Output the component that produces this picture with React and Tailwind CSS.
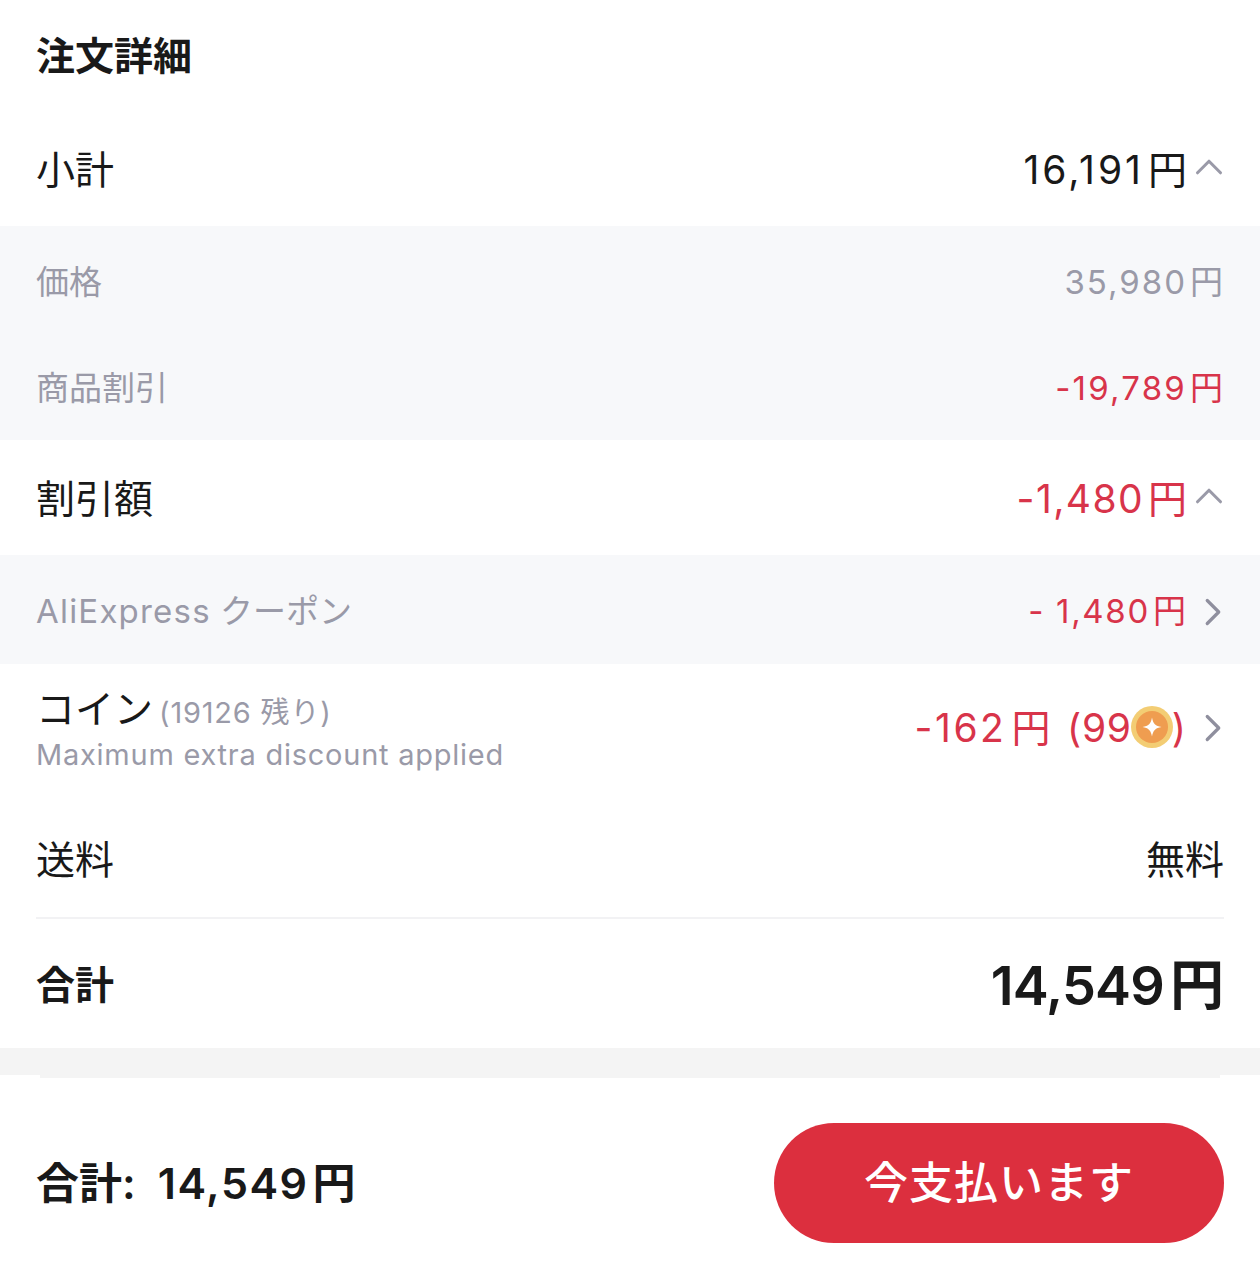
import { ChevronUp, ChevronRight } from "lucide-react";

function Yen({ n, track, gap = "ml-[3px]" }) {
    return (
        <span>
            <span className={track}>{n}</span>
            <span className={gap}>円</span>
        </span>
    );
}

function Row({ label, value, icon, valueClass = "text-[#191919]", className = "" }) {
    return (
        <div className={`flex items-center justify-between pl-[36px] pr-[36px] ${className}`}>
            <span>{label}</span>
            <span className="flex items-center">
                <span className={valueClass}>{value}</span>
                {icon}
            </span>
        </div>
    );
}

function Up() {
    return <ChevronUp className="-ml-[1px] -mr-[8px] mb-[6px] w-[46px] h-[46px] text-[#9a9aa8]" strokeWidth={1.6} />;
}

function Right() {
    return <ChevronRight className="ml-[4px] -mr-[12px] w-[46px] h-[46px] text-[#8f8f9e]" strokeWidth={1.7} />;
}

function Coin() {
    return (
        <svg viewBox="0 0 42 42" className="w-[42px] h-[42px] -ml-[1px] -mr-[1px] -mt-[2px]">
            <circle cx="21" cy="21" r="21" fill="#f3cd74" />
            <circle cx="21" cy="21" r="16" fill="#ef9d50" />
            <path d="M21 11.5c1 6 3.500 8.500 9.500 9.500-6 1-8.500 3.500-9.500 9.500-1-6-3.500-8.500-9.500-9.500 6-1 8.500-3.500 9.500-9.500z" fill="#fff" />
        </svg>
    );
}

export default function App() {
    return (
        <div className="w-[1260px] h-[1279px] bg-white flex flex-col text-[#191919] font-['Inter','Noto_Sans_CJK_JP',sans-serif] overflow-hidden">
            <div className="h-[112px] pl-[36px] flex items-center text-[39px] font-bold">注文詳細</div>

            <Row label="小計" value={<Yen n="16,191" track="tracking-[3px]" gap="ml-[4px]" />} icon={<Up />} className="h-[114px] text-[39px] pt-[2px]" />

            <div className="bg-[#f7f8fa] text-[33px] text-[#9a9aa8]">
                <Row label="価格" value={<Yen n="35,980" track="tracking-[2px]" />} valueClass="text-[#9a9aa8] mr-[1px]" className="h-[107px] pt-[7px]" />
                <Row label="商品割引" value={<Yen n="-19,789" track="tracking-[2.200px]" />} valueClass="text-[#d8344a] mr-[1px]" className="h-[107px] pt-[5px]" />
            </div>

            <Row label="割引額" value={<Yen n="-1,480" track="tracking-[1.400px]" gap="ml-[4px]" />} valueClass="text-[#d8344a]" icon={<Up />} className="h-[115px] text-[39px] pt-[3px]" />

            <Row
                label={<span><span className="tracking-[1.2px]">AliExpress</span> クーポン</span>}
                value={<Yen n="- 1,480" track="tracking-[1.700px]" />}
                valueClass="text-[#d8344a]"
                icon={<Right />}
                className="h-[109px] bg-[#f7f8fa] text-[33px] text-[#9a9aa8] pt-[4px]"
            />

            <div className="h-[136px] pl-[36px] pr-[36px] flex justify-between items-start pt-[18px]">
                <div>
                    <div className="text-[39px] leading-[54px] flex items-baseline">
                        コイン
                        <span className="ml-[6px] text-[29px] tracking-[0.8px] text-[#9a9aa8]">(19126 残り)</span>
                    </div>
                    <div className="text-[29px] leading-[30px] tracking-[0.75px] text-[#9a9aa8]">Maximum extra discount applied</div>
                </div>
                <div className="flex items-center text-[39px] text-[#d8344a] mt-[17px]">
                    <span className="whitespace-pre">
                        <Yen n="-162" track="tracking-[2.500px]" gap="ml-[5px]" />
                        <span className="ml-[5px] tracking-[0.7px]">{" (99"}</span>
                    </span>
                    <Coin />
                    <span>)</span>
                    <Right />
                </div>
            </div>

            <Row label="送料" value="無料" className="h-[117px] text-[39px] pt-[4px]" />

            <div className="mx-[36px] h-[2px] bg-[#f2f2f4]" />

            <div className="h-[129px] pl-[36px] pr-[36px] flex items-center justify-between font-bold pt-[4px]">
                <span className="text-[39px]">合計</span>
                <span className="text-[54px] font-semibold"><Yen n="14,549" track="tracking-[-0.800px]" gap="ml-[6px]" /></span>
            </div>

            <div className="h-[27px] bg-[#f4f4f4]" />
            <div className="mx-[40px] h-[3px] bg-[#f4f4f4]" />

            <div className="flex-1 pl-[36px] pr-[36px] flex items-center justify-between pt-[9px]">
                <span className="text-[43px] font-semibold">
                    合計:<span className="ml-[22px]"><Yen n="14,549" track="tracking-[1.500px]" gap="ml-[4px]" /></span>
                </span>
                <button className="w-[450px] h-[120px] rounded-[60px] bg-[#dc2f3e] text-white text-[44px] font-medium tracking-[1px]">今支払います</button>
            </div>
        </div>
    );
}
